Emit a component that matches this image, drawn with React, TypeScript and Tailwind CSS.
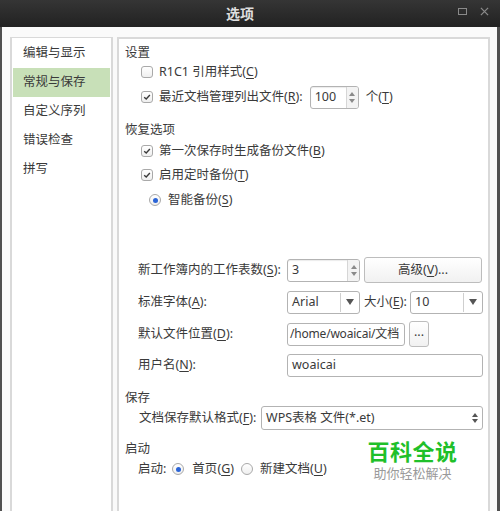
import React from "react";

const sideItems = ["编辑与显示", "常规与保存", "自定义序列", "错误检查", "拼写"];

function M({ k }: { k: string }) {
  return (
    <>
      (<span className="underline decoration-1 underline-offset-2">{k}</span>)
    </>
  );
}

function Check({ checked }: { checked?: boolean }) {
  return (
    <span className="flex h-[12px] w-[12px] shrink-0 items-center justify-center rounded-[3px] border border-[#a9a9a9] bg-gradient-to-b from-white to-[#efefef]">
      {checked && (
        <svg viewBox="0 0 10 10" className="h-[8px] w-[8px]">
          <path d="M1.5 5.3 L4 7.6 L8.6 2.6" fill="none" stroke="#3a3a3a" strokeWidth="1.7" />
        </svg>
      )}
    </span>
  );
}

function Radio({ checked }: { checked?: boolean }) {
  return (
    <span className="flex h-[12px] w-[12px] shrink-0 items-center justify-center rounded-full border border-[#a9a9a9] bg-gradient-to-b from-white to-[#efefef]">
      {checked && <span className="h-[5px] w-[5px] rounded-full bg-[#2b64d6]" />}
    </span>
  );
}

function SpinArrows() {
  return (
    <span className="flex h-full w-[12px] flex-col items-center justify-center gap-[3px] border-l border-[#d6d6d6] bg-[#f3f3f3] text-[#8a8a8a]">
      <svg viewBox="0 0 6 4" className="h-[4px] w-[6px]"><path d="M0 4 L3 0 L6 4 Z" fill="currentColor" /></svg>
      <svg viewBox="0 0 6 4" className="h-[4px] w-[6px]"><path d="M0 0 L6 0 L3 4 Z" fill="currentColor" /></svg>
    </span>
  );
}

function Spin({ value, w }: { value: string; w: string }) {
  return (
    <div className={`flex h-[23px] ${w} items-center overflow-hidden rounded-[3px] border border-[#b3b3b3] bg-white shadow-[inset_0_1px_1px_rgba(0,0,0,0.08)]`}>
      <span className="flex-1 pl-[4px]">{value}</span>
      <SpinArrows />
    </div>
  );
}

function Combo({ value, w }: { value: string; w: string }) {
  return (
    <div className={`flex h-[23px] ${w} items-center rounded-[3px] border border-[#b3b3b3] bg-white`}>
      <span className="flex-1 pl-[4px]">{value}</span>
      <span className="flex h-[19px] w-[19px] items-center justify-center border-l border-[#cfcfcf] text-[#555]">
        <svg viewBox="0 0 8 6" className="h-[6px] w-[8px]"><path d="M0 0 L8 0 L4 6 Z" fill="currentColor" /></svg>
      </span>
    </div>
  );
}

export default function App() {
  return (
    <div className="h-[511px] w-[500px] overflow-hidden bg-white font-['Noto_Sans','Noto_Sans_CJK_SC',sans-serif] text-[12.5px] text-[#3a3a3a]">
      <header className="relative flex h-[27px] items-center justify-center bg-gradient-to-b from-[#353535] to-[#222] pr-[20px]">
        <span className="text-[14px] font-bold text-[#dedede]">选项</span>
        <span className="absolute left-[458px] top-[8px] h-[7px] w-[9px] border border-[#8a8a8a]" />
        <svg viewBox="0 0 10 10" className="absolute left-[480px] top-[7px] h-[9px] w-[9px]">
          <path d="M1 1 L9 9 M9 1 L1 9" stroke="#8a8a8a" strokeWidth="1.4" />
        </svg>
      </header>

      <div className="flex h-[484px] gap-[4px] border-x-2 border-r-[3px] border-[#505050] bg-[#fafafa] pl-[8px] pt-[10px]">
        <aside className="w-[103px] shrink-0 border-x-2 border-t border-[#d9d9d9] bg-white pt-[1px]">
          {sideItems.map((item, i) => (
            <div
              key={item}
              className={`mx-[1px] flex h-[29px] items-center pl-[10px] ${i === 1 ? "bg-[#c8e0b8]" : ""}`}
            >
              {item}
            </div>
          ))}
        </aside>

        <section className="relative flex w-[373px] flex-col items-start whitespace-nowrap border-2 border-b-0 border-[#d9d9d9] bg-white pl-[6px]">
          <div className="mt-[5px] flex h-[18px] items-center">设置</div>
          <div className="ml-[16px] flex h-[20px] items-center gap-[6px]">
            <Check />
            <span>R1C1 引用样式<M k="C" /></span>
          </div>
          <div className="ml-[16px] mt-[1px] flex h-[28px] items-center gap-[6px]">
            <Check checked />
            <span>最近文档管理列出文件<M k="R" />:</span>
            <div className="ml-[1px]">
              <Spin value="100" w="w-[49px]" />
            </div>
            <span className="ml-[1px]">个<M k="T" /></span>
          </div>

          <div className="mt-[10px] flex h-[19px] items-center">恢复选项</div>
          <div className="ml-[16px] mt-[1px] flex h-[20px] items-center gap-[6px]">
            <Check checked />
            <span>第一次保存时生成备份文件<M k="B" /></span>
          </div>
          <div className="ml-[16px] mt-[4px] flex h-[20px] items-center gap-[6px]">
            <Check checked />
            <span>启用定时备份<M k="T" /></span>
          </div>
          <div className="ml-[24px] mt-[5px] flex h-[20px] items-center gap-[7px]">
            <Radio checked />
            <span>智能备份<M k="S" /></span>
          </div>

          <div className="ml-[13px] mt-[47px] flex h-[26px] items-center">
            <span className="w-[149px]">新工作簿内的工作表数<M k="S" />:</span>
            <Spin value="3" w="w-[73px]" />
            <button className="ml-[4px] flex h-[26px] w-[118px] items-center justify-center rounded-[3px] border border-[#bdbdbd] bg-gradient-to-b from-white to-[#f1f1f1]">
              高级<M k="V" />...
            </button>
          </div>
          <div className="ml-[13px] mt-[8px] flex h-[22px] items-center">
            <span className="w-[149px]">标准字体<M k="A" />:</span>
            <Combo value="Arial" w="w-[73px]" />
            <span className="ml-[4px] w-[46px]">大小<M k="E" />:</span>
            <Combo value="10" w="w-[73px]" />
          </div>
          <div className="ml-[13px] mt-[8px] flex h-[26px] items-center">
            <span className="w-[149px]">默认文件位置<M k="D" />:</span>
            <div className="flex h-[23px] w-[118px] items-center overflow-hidden rounded-[3px] border border-[#b3b3b3] bg-white pl-[2px] text-[12px] tracking-[-0.2px]">
              /home/woaicai/文档
            </div>
            <button className="ml-[4px] flex h-[26px] w-[20px] items-center justify-center rounded-[3px] border border-[#bdbdbd] bg-gradient-to-b from-white to-[#f1f1f1] pb-[4px]">
              ...
            </button>
          </div>
          <div className="ml-[13px] mt-[7px] flex h-[22px] items-center">
            <span className="w-[149px]">用户名<M k="N" />:</span>
            <div className="flex h-[23px] w-[196px] items-center rounded-[3px] border border-[#b3b3b3] bg-white pl-[4px]">
              woaicai
            </div>
          </div>

          <div className="mt-[14px] flex h-[16px] items-center">保存</div>
          <div className="ml-[14px] flex h-[24px] items-center">
            <span className="w-[122px] shrink-0">文档保存默认格式<M k="F" />:</span>
            <div className="flex h-[24px] w-[222px] items-center rounded-[3px] border border-[#b3b3b3] bg-white pl-[4px]">
              <span className="flex-1">WPS表格 文件(*.et)</span>
              <span className="mr-[4px] flex flex-col items-center gap-[2px] text-[#555]">
                <svg viewBox="0 0 6 4" className="h-[4px] w-[6px]"><path d="M0 4 L3 0 L6 4 Z" fill="currentColor" /></svg>
                <svg viewBox="0 0 6 4" className="h-[4px] w-[6px]"><path d="M0 0 L6 0 L3 4 Z" fill="currentColor" /></svg>
              </span>
            </div>
          </div>

          <div className="mt-[9px] flex h-[20px] items-center">启动</div>
          <div className="ml-[13px] flex h-[20px] items-center">
            <span>启动:</span>
            <span className="ml-[6px]"><Radio checked /></span>
            <span className="ml-[8px]">首页<M k="G" /></span>
            <span className="ml-[7px]"><Radio /></span>
            <span className="ml-[7px]">新建文档<M k="U" /></span>
          </div>

          <div className="absolute left-[231px] top-[391px] flex h-[57px] w-[125px] flex-col items-center bg-white pt-[7px]">
            <span className="text-[22px] font-bold leading-[28px] tracking-[0.5px] text-[#1fc02a]">百科全说</span>
            <span className="text-[13px] leading-[16px] text-[#9a9a9a]">助你轻松解决</span>
          </div>
        </section>
      </div>
    </div>
  );
}
